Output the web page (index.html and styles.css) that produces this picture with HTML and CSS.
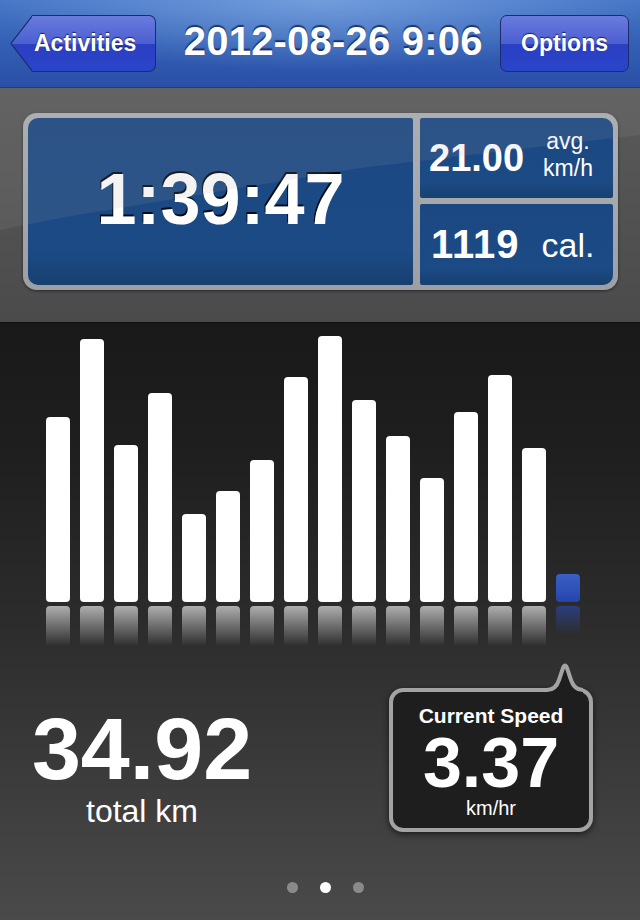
FILE: index.html
```html
<!DOCTYPE html>
<html>
<head>
<title>Ride</title>
<link rel="stylesheet" href="styles.css">
</head>
<body>
<div id="app">

  <div class="navbar">
    <div class="back">
      <svg class="back-tip" width="22" height="57" viewBox="0 0 22 57">
        <defs>
          <linearGradient id="btn-grad" x1="0" y1="0" x2="0" y2="1">
            <stop offset="0" stop-color="#6a7bdd"/>
            <stop offset="0.5" stop-color="#4c5fd2"/>
            <stop offset="0.52" stop-color="#2b3fc3"/>
            <stop offset="1" stop-color="#2a45c9"/>
          </linearGradient>
        </defs>
        <path d="M22.5,0.5 L1,28.5 L22.5,56.5 Z" fill="url(#btn-grad)"/>
        <path d="M22.5,0.5 L1,28.5 L22.5,56.5" fill="none" stroke="#1d2a6e" stroke-width="1.2"/>
      </svg>
      <div class="back-body">Activities</div>
    </div>
    <div class="title">2012-08-26 9:06</div>
    <div class="btn">Options</div>
  </div>

  <div class="summary">
    <div class="card">
      <div class="panel panel-time">1:39:47</div>
      <div class="panel panel-avg">
        <span class="value">21.00</span>
        <span class="unit">avg.<br>km/h</span>
      </div>
      <div class="panel panel-cal">
        <span class="value value-cal">1119</span>
        <span class="unit unit-cal">cal.</span>
      </div>
    </div>
  </div>

  <div class="ride">
    <div class="chart">
      <div class="col"><div class="bar" style="height:185px"></div><div class="refl"></div></div>
      <div class="col"><div class="bar" style="height:263px"></div><div class="refl"></div></div>
      <div class="col"><div class="bar" style="height:157px"></div><div class="refl"></div></div>
      <div class="col"><div class="bar" style="height:209px"></div><div class="refl"></div></div>
      <div class="col"><div class="bar" style="height:88px"></div><div class="refl"></div></div>
      <div class="col"><div class="bar" style="height:111px"></div><div class="refl"></div></div>
      <div class="col"><div class="bar" style="height:142px"></div><div class="refl"></div></div>
      <div class="col"><div class="bar" style="height:225px"></div><div class="refl"></div></div>
      <div class="col"><div class="bar" style="height:266px"></div><div class="refl"></div></div>
      <div class="col"><div class="bar" style="height:202px"></div><div class="refl"></div></div>
      <div class="col"><div class="bar" style="height:166px"></div><div class="refl"></div></div>
      <div class="col"><div class="bar" style="height:124px"></div><div class="refl"></div></div>
      <div class="col"><div class="bar" style="height:190px"></div><div class="refl"></div></div>
      <div class="col"><div class="bar" style="height:227px"></div><div class="refl"></div></div>
      <div class="col"><div class="bar" style="height:154px"></div><div class="refl"></div></div>
      <div class="col"><div class="bar bar-now" style="height:28px"></div><div class="refl refl-now"></div></div>
    </div>

    <div class="stats">
      <div class="total">
        <div class="total-value">34.92</div>
        <div class="total-label">total km</div>
      </div>
      <div class="bubble">
        <svg class="bubble-tip" width="36" height="34" viewBox="0 0 36 34">
          <path d="M0,28 C7,28 10,24 12,18 L16,6 Q18,1 20,6 L24,18 C26,24 29,28 36,28 L36,34 L0,34 Z" fill="#1e1e1e"/>
          <path d="M0,28 C7,28 10,24 12,18 L16,6 Q18,1 20,6 L24,18 C26,24 29,28 36,28" fill="none" stroke="#a3a3a3" stroke-width="4"/>
        </svg>
        <div class="bubble-title">Current Speed</div>
        <div class="bubble-value">3.37</div>
        <div class="bubble-unit">km/hr</div>
      </div>
    </div>

    <div class="pager">
      <span class="dot"></span>
      <span class="dot active"></span>
      <span class="dot"></span>
    </div>
  </div>

</div>
</body>
</html>
```

FILE: styles.css
```css
body {
  margin: 0;
  font-family: "Liberation Sans", Arial, sans-serif;
  background-color: #1a1a1a;
  color: #fff;
}

#app {
  width: 640px;
  height: 920px;
  overflow: hidden;
}

/* top bar */

.navbar {
  height: 88px;
  box-sizing: border-box;
  padding: 0 11px 0 10px;
  display: flex;
  align-items: center;
  justify-content: space-between;
  background:
    radial-gradient(ellipse 340px 70px at 50% 0, rgba(150, 190, 240, 0.55), rgba(150, 190, 240, 0)),
    linear-gradient(#4676c6, #3360b4 50%, #2a4fa6);
  border-bottom: 1px solid #1f3c80;
}

.back {
  display: flex;
  height: 57px;
}

.back-tip {
  display: block;
}

.back-body,
.btn {
  height: 57px;
  box-sizing: border-box;
  display: flex;
  align-items: center;
  font-size: 23px;
  font-weight: bold;
  text-shadow: 0 -1px 1px rgba(0, 0, 40, 0.7);
  background: linear-gradient(#6a7bdd, #4c5fd2 50%, #2b3fc3 52%, #2a45c9);
  border: 1px solid #1d2a6e;
}

.back-body {
  border-left: none;
  border-radius: 0 7px 7px 0;
  padding: 0 19px 0 2px;
}

.btn {
  border-radius: 7px;
  padding: 0 20px;
}

.title {
  font-size: 40px;
  font-weight: bold;
  letter-spacing: 0.2px;
  margin: 0 0 4px 10px;
  text-shadow: 0 -2px 1px rgba(10, 20, 60, 0.7);
}

/* summary card */

.summary {
  position: relative;
  height: 234px;
  box-sizing: border-box;
  padding: 25px 22px 0 23px;
  background: linear-gradient(#5a5a5a, #4b4b4b);
}

.summary::after {
  content: "";
  position: absolute;
  left: 0;
  top: 0;
  right: 0;
  bottom: 0;
  background: rgba(160, 160, 160, 0.13);
  clip-path: polygon(0 0, 100% 0, 100% 47px, 360px 80px, 60px 130px, 0 142px);
  pointer-events: none;
}

.card {
  display: grid;
  grid-template-columns: 385px 193px;
  grid-template-rows: 80px 81px;
  gap: 6px 7px;
  padding: 5px;
  background: linear-gradient(#aeb1b4, #9c9fa3);
  border-radius: 14px;
  box-shadow: 0 1px 3px rgba(0, 0, 0, 0.5);
}

.panel {
  display: flex;
  align-items: center;
  background: linear-gradient(#1c4882, #1b4a85 80%, #17406f);
}

.panel-time {
  grid-row: span 2;
  justify-content: center;
  border-radius: 10px 2px 2px 10px;
  font-size: 72px;
  font-weight: bold;
  padding-bottom: 5px;
  text-shadow: -1px -2px 0 rgba(0, 0, 0, 0.85);
}

.panel-avg {
  border-radius: 2px 10px 2px 2px;
  padding-left: 9px;
  gap: 19px;
}

.panel-cal {
  border-radius: 2px 2px 10px 2px;
  padding-left: 11px;
  gap: 22px;
}

.value {
  font-size: 38px;
  font-weight: bold;
}

.value-cal {
  font-size: 40px;
  letter-spacing: 1px;
}

.unit {
  font-size: 23px;
  line-height: 27px;
  text-align: center;
  margin-top: -6px;
}

.unit-cal {
  font-size: 34px;
  line-height: 1;
  margin-top: 0;
}

/* chart and stats */

.ride {
  height: 598px;
  background: linear-gradient(#191919, #1e1e1e 120px, #2c2c2c 300px, #3b3b3b 450px, #4a4a4a);
  border-top: 1px solid #111;
  box-sizing: border-box;
}

.chart {
  display: flex;
  align-items: flex-end;
  gap: 10px;
  padding: 0 46px;
  height: 323px;
}

.col {
  width: 24px;
  display: flex;
  flex-direction: column;
}

.bar {
  background-color: #fff;
  border-radius: 4px;
}

.bar-now {
  background: linear-gradient(#3a5fc6, #2545ac);
}

.refl {
  height: 40px;
  margin-top: 4px;
  border-radius: 4px 4px 0 0;
  background: linear-gradient(rgba(255, 255, 255, 0.62), rgba(255, 255, 255, 0));
}

.refl-now {
  height: 28px;
  margin-top: 4px;
  margin-bottom: 12px;
  background: linear-gradient(rgba(45, 75, 180, 0.6), rgba(45, 75, 180, 0));
}

.stats {
  display: flex;
  justify-content: space-between;
  align-items: flex-start;
  padding: 42px 47px 0 0;
}

.total {
  width: 284px;
  margin-top: 17px;
  text-align: center;
}

.total-value {
  font-size: 88px;
  font-weight: bold;
  line-height: 1;
}

.total-label {
  font-size: 32px;
  line-height: 1;
  margin-top: 2px;
}

.bubble {
  position: relative;
  width: 196px;
  padding: 13px 0 10px;
  text-align: center;
  background-color: #1e1e1e;
  border: 4px solid #a3a3a3;
  border-radius: 14px;
  box-shadow: 0 2px 6px rgba(0, 0, 0, 0.6);
}

.bubble-tip {
  position: absolute;
  top: -30px;
  right: 6px;
}

.bubble-title {
  font-size: 21px;
  font-weight: bold;
  line-height: 1;
}

.bubble-value {
  font-size: 70px;
  font-weight: bold;
  line-height: 1;
  margin-top: 2px;
}

.bubble-unit {
  font-size: 20px;
  line-height: 1;
}

.pager {
  display: flex;
  justify-content: center;
  gap: 22px;
  padding-left: 11px;
  margin-top: 50px;
}

.dot {
  width: 11px;
  height: 11px;
  border-radius: 50%;
  background-color: #8a8a8a;
}

.dot.active {
  background-color: #fff;
}
```
